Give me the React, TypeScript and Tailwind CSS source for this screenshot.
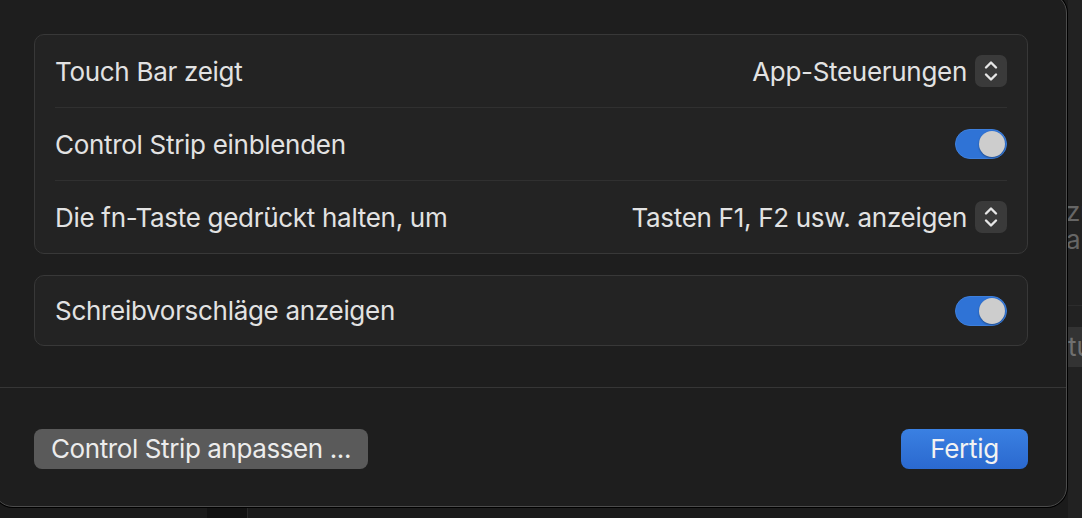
import React from 'react';

const font = { fontFamily: 'Inter, "Noto Sans", sans-serif' };

const Stepper = () => (
  <div className="w-[32px] h-[32px] rounded-[7px] bg-[#3a3a3a] flex items-center justify-center">
    <svg width="32" height="32" viewBox="0 0 32 32" fill="none">
      <path d="M11 12.5 L16 7.5 L21 12.5" stroke="#e6e6e6" strokeWidth="2.4" strokeLinecap="round" strokeLinejoin="round" />
      <path d="M11 19.5 L16 24.5 L21 19.5" stroke="#e6e6e6" strokeWidth="2.4" strokeLinecap="round" strokeLinejoin="round" />
    </svg>
  </div>
);

const Toggle = () => (
  <div className="w-[52px] h-[30px] rounded-full bg-[#2f73d6] border border-[#3d7fdc] flex items-center justify-end pr-[1px]">
    <div className="w-[26px] h-[26px] rounded-full bg-[#cdcdcd] shadow-[0_1px_2px_rgba(0,0,0,0.35)]" />
  </div>
);

const Row = ({ label, children, h = 'h-[72px]' }: { label: string; children: React.ReactNode; h?: string }) => (
  <div className={`${h} flex items-center justify-between`}>
    <span className="text-[26px] text-[#e2e2e2] tracking-[-0.3px]">{label}</span>
    {children}
  </div>
);

export default function App() {
  return (
    <div className="relative w-[1082px] h-[518px] bg-[#1b1b1b] overflow-hidden" style={font}>
      {/* window behind the sheet, cut by the viewport edge */}
      <div className="absolute left-[1068px] top-0 w-[20px] h-[518px] bg-[#222222]">
        <div className="mt-[198px] text-[26px] leading-[28px] text-[#666666] -ml-[2px]">zu</div>
        <div className="text-[26px] leading-[28px] text-[#666666] -ml-[2px]">al</div>
        <div className="mt-[51px] h-px bg-[#2c2c2c]" />
        <div className="mt-[21px] h-[40px] bg-[#333333] text-[26px] leading-[40px] text-[#707070] -ml-[2px] pl-[2px]">tu</div>
      </div>
      <div className="absolute left-[207px] top-[507px] w-[41px] h-[11px] bg-[#121212] border-r border-[#2a2a2a]" />

      {/* sheet */}
      <div className="absolute left-[-7px] top-[-7px] w-[1074px] h-[514px] rounded-[20px] bg-[#1e1e1e] border border-[#4c4c4c] shadow-[0_0_0_1px_#000] flex flex-col">
        <div className="pl-10 pr-[38px] pt-10 pb-[41px] flex flex-col gap-[21px]">
          <div className="rounded-[10px] bg-[#232323] border border-[#383838] px-5">
            <Row label="Touch Bar zeigt">
              <div className="flex items-center gap-[8px]">
                <span className="text-[26px] text-[#e2e2e2] tracking-[-0.3px]">App-Steuerungen</span>
                <Stepper />
              </div>
            </Row>
            <div className="h-px bg-[#303030]" />
            <Row label="Control Strip einblenden">
              <Toggle />
            </Row>
            <div className="h-px bg-[#303030]" />
            <Row label="Die fn-Taste gedrückt halten, um">
              <div className="flex items-center gap-[8px]">
                <span className="text-[26px] text-[#e2e2e2] tracking-[-0.3px]">Tasten F1, F2 usw. anzeigen</span>
                <Stepper />
              </div>
            </Row>
          </div>
          <div className="rounded-[10px] bg-[#232323] border border-[#383838] px-5">
            <Row label="Schreibvorschläge anzeigen" h="h-[69px]">
              <Toggle />
            </Row>
          </div>
        </div>
        <div className="h-px bg-[#363636]" />
        <div className="pl-10 pr-[38px] pt-[41px] flex items-center justify-between">
          <button className="h-[40px] px-[17px] rounded-[8px] bg-[#5a5a5a] text-[26px] text-[#ececec] tracking-[-0.4px] leading-none">
            Control Strip anpassen ...
          </button>
          <button className="h-[40px] w-[127px] rounded-[8px] bg-gradient-to-b from-[#3a80e2] to-[#2b69cf] text-[26px] text-[#f2f2f2] tracking-[-0.3px] leading-none">
            Fertig
          </button>
        </div>
      </div>
    </div>
  );
}
